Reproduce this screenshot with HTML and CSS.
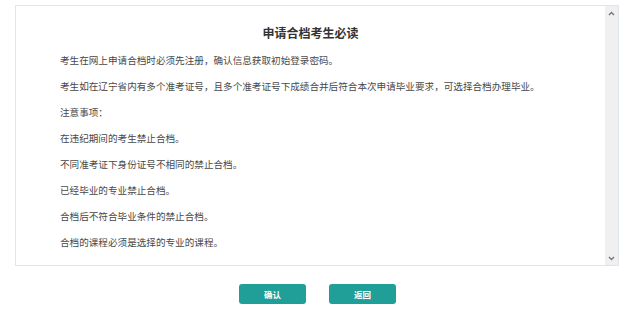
FILE: index.html
```html
<!DOCTYPE html>
<html lang="zh-CN">
<head>
  <meta charset="UTF-8" />
  <meta name="viewport" content="width=device-width, initial-scale=1.0"/>
  <title>申请合档考生必读</title>
  <link rel="stylesheet" href="styles.css">
</head>
<body>
  <div class="notice-box">
    <div class="notice-content">
      <h2 class="notice-title">申请合档考生必读</h2>
      <p>考生在网上申请合档时必须先注册，确认信息获取初始登录密码。</p>
      <p>考生如在辽宁省内有多个准考证号，且多个准考证号下成绩合并后符合本次申请毕业要求，可选择合档办理毕业。</p>
      <p>注意事项：</p>
      <p>在违纪期间的考生禁止合档。</p>
      <p>不同准考证下身份证号不相同的禁止合档。</p>
      <p>已经毕业的专业禁止合档。</p>
      <p>合档后不符合毕业条件的禁止合档。</p>
      <p>合档的课程必须是选择的专业的课程。</p>
    </div>
    <div class="scrollbar">
      <svg class="arrow" width="7" height="5" viewBox="0 0 7 5"><path d="M1 4 L3.5 1.5 L6 4" fill="none" stroke="#777" stroke-width="1.4"/></svg>
      <svg class="arrow" width="7" height="5" viewBox="0 0 7 5"><path d="M1 1 L3.5 3.5 L6 1" fill="none" stroke="#777" stroke-width="1.4"/></svg>
    </div>
  </div>

  <div class="actions">
    <button class="btn">确认</button>
    <button class="btn">返回</button>
  </div>
</body>
</html>
```

FILE: styles.css
```css
body {
  margin: 0;
  padding: 5px 16px 0 15px;
  background: #fff;
  font-family: "Noto Sans CJK SC", "Microsoft YaHei", sans-serif;
  color: #484848;
}
.notice-box {
  display: flex;
  height: 259px;
  border: 1px solid #dde5ef;
}
.notice-content {
  flex: 1;
  padding: 17px 0 0 44px;
  overflow: hidden;
}
.notice-title {
  margin: 0 0 4px -44px;
  text-align: center;
  font-size: 12px;
  line-height: 20px;
  font-weight: bold;
  color: #333;
}
.notice-content p {
  margin: 0;
  font-size: 9.6px;
  line-height: 26px;
}
.scrollbar {
  width: 13px;
  background: #f0f0f0;
  display: flex;
  flex-direction: column;
  justify-content: space-between;
  align-items: center;
  padding: 5px 0 4px;
}
.arrow {
  display: block;
}
.actions {
  display: flex;
  justify-content: center;
  gap: 23px;
  margin-top: 18px;
  padding-left: 1px;
}
.btn {
  width: 67px;
  height: 20px;
  border: none;
  border-radius: 3px;
  background: #1f9f98;
  color: #fff;
  font-family: inherit;
  font-size: 8.5px;
  font-weight: bold;
  padding: 0;
  cursor: pointer;
}
```
